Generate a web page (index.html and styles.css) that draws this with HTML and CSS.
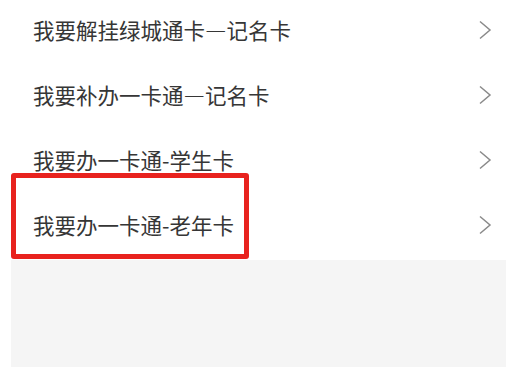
FILE: index.html
```html
<!DOCTYPE html>
<html lang="zh-CN">
<head>
<meta charset="utf-8">
<link rel="stylesheet" href="styles.css">
</head>
<body>
<div class="page">
  <div class="list">
    <div class="row"><span class="label">我要解挂绿城通卡—记名卡</span><svg class="chev" width="14" height="20" viewBox="0 0 14 20"><polyline points="2,1.5 12,10 2,18.5" fill="none" stroke="#8a8a8a" stroke-width="1.5"/></svg></div>
    <div class="row"><span class="label">我要补办一卡通—记名卡</span><svg class="chev" width="14" height="20" viewBox="0 0 14 20"><polyline points="2,1.5 12,10 2,18.5" fill="none" stroke="#8a8a8a" stroke-width="1.5"/></svg></div>
    <div class="row"><span class="label">我要办一卡通-学生卡</span><svg class="chev" width="14" height="20" viewBox="0 0 14 20"><polyline points="2,1.5 12,10 2,18.5" fill="none" stroke="#8a8a8a" stroke-width="1.5"/></svg></div>
    <div class="row"><span class="label">我要办一卡通-老年卡</span><svg class="chev" width="14" height="20" viewBox="0 0 14 20"><polyline points="2,1.5 12,10 2,18.5" fill="none" stroke="#8a8a8a" stroke-width="1.5"/></svg></div>
    <div class="highlight"></div>
  </div>
  <div class="footer"></div>
</div>
</body>
</html>
```

FILE: styles.css
```css
html, body {
  margin: 0;
  padding: 0;
  background: #ffffff;
}
.page {
  width: 506px;
  height: 367px;
  overflow: hidden;
  font-family: "Noto Sans CJK SC", "Noto Sans", sans-serif;
}
.list {
  position: relative;
  background: #ffffff;
}
.row {
  box-sizing: border-box;
  height: 65px;
  display: flex;
  align-items: center;
  justify-content: space-between;
  padding: 0 14px 5px 33px;
}
.label {
  font-size: 21.5px;
  color: #363636;
  line-height: 1;
}
.chev {
  display: block;
  margin-top: -1px;
}
.highlight {
  position: absolute;
  left: 11px;
  top: 173px;
  width: 228px;
  height: 76px;
  border: 5px solid #e8221e;
  border-radius: 3px;
}
.footer {
  margin-left: 11px;
  height: 107px;
  background: #f5f5f5;
}
```
